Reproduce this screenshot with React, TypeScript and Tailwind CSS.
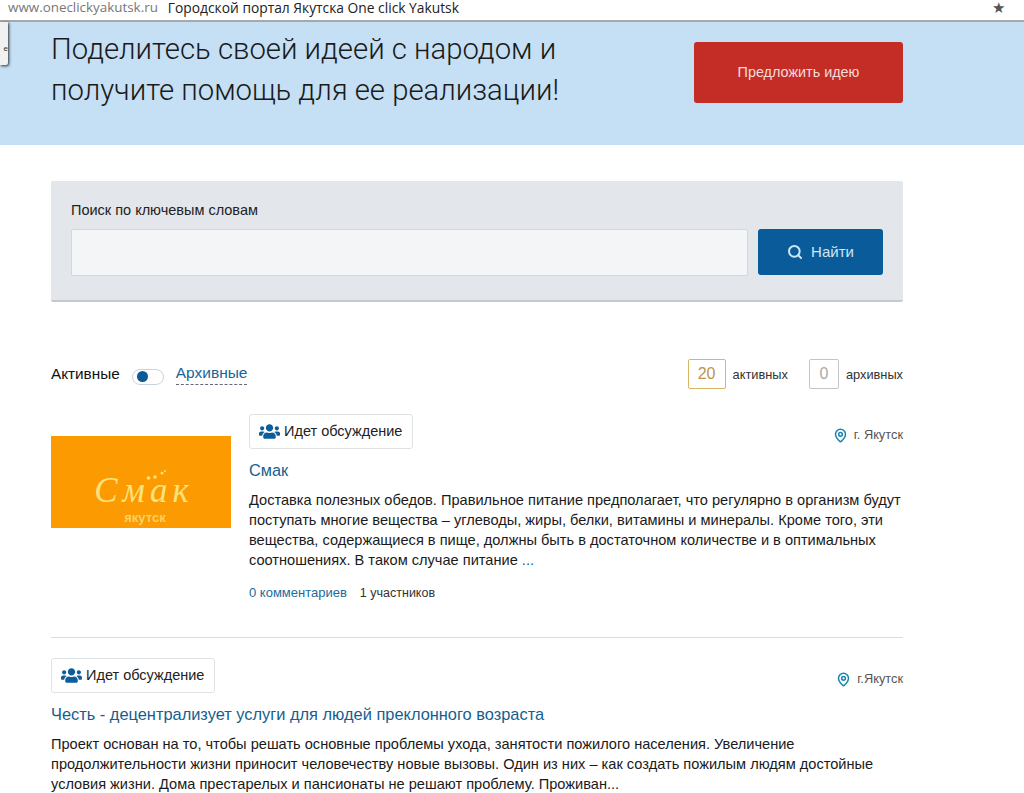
import { FaUsers } from "react-icons/fa";
import { MapPin, Search } from "lucide-react";

const SANS = "font-['Liberation_Sans',Arial,sans-serif]";

function StatusBadge() {
  return (
    <div className="flex h-[35px] items-center gap-[4px] rounded-[3px] border border-[#e0e3e6] bg-white pl-[9px] pr-[10px] text-[14.5px] text-[#222]">
      <FaUsers className="text-[21px] text-[#0d5d9a]" />
      <span>Идет обсуждение</span>
    </div>
  );
}

function Place({ label }: { label: string }) {
  return (
    <div className="mt-[7px] flex items-center gap-[6px] text-[12.8px] text-[#555]">
      <MapPin className="h-[15px] w-[15px] text-[#1a86ad]" strokeWidth={2.4} />
      <span>{label}</span>
    </div>
  );
}

function Counter({ value, label, accent }: { value: string; label: string; accent: boolean }) {
  return (
    <div className="flex items-center gap-[7px]">
      <div
        className={
          "flex h-[30px] items-center justify-center rounded-[2px] border text-[16px] " +
          (accent ? "w-[38px] border-[#d9b566] text-[#c09448]" : "w-[30px] border-[#c4c4c4] text-[#aaa]")
        }
      >
        {value}
      </div>
      <span className="mt-[2px] text-[12.8px] text-[#333]">{label}</span>
    </div>
  );
}

export default function App() {
  return (
    <div className={"relative h-[793px] w-[1024px] overflow-hidden bg-white " + SANS}>
      {/* browser address bar from the screenshot */}
      <div className="flex h-[22px] items-start justify-between border-b-[2px] border-[#a8a8a8] bg-white pl-[8px] pr-[19px] font-['Open_Sans',sans-serif] leading-[15px]">
        <div className="flex gap-[10px]">
          <span className="text-[13.4px] text-[#777]">www.oneclickyakutsk.ru</span>
          <span className="text-[13.8px] text-[#222]">Городской портал Якутска One click Yakutsk</span>
        </div>
        <span className="text-[15px] leading-[15px] text-[#555]">★</span>
      </div>

      <div className="absolute left-0 top-[22px] flex h-[43px] w-[8px] items-end justify-end rounded-br-[2px] bg-[#f1f1f1] pb-[12px] text-[8px] leading-none text-[#333] shadow-[1px_1px_3px_rgba(0,0,0,0.8)]">
        е
      </div>

      {/* hero */}
      <div className="flex h-[123px] items-start justify-between bg-[#c5dff4] pl-[51px] pr-[121px]">
        <h1 className="mt-[7px] font-['Roboto',sans-serif] text-[29.3px] font-light leading-[41px] text-[#1a1a1a]">
          Поделитесь своей идеей с народом и
          <br />
          получите помощь для ее реализации!
        </h1>
        <button className="mt-[20px] h-[61px] w-[209px] rounded-[3px] bg-[#c42d26] text-[14.4px] text-[#f7dcd9]">
          Предложить идею
        </button>
      </div>

      <main className="ml-[51px] w-[852px]">
        {/* search */}
        <div className="mt-[36px] h-[121px] rounded-[2px] border-b-[2px] border-[#c5cad0] bg-[#e3e7ec] px-[20px] pt-[21px]">
          <div className="text-[14.5px] leading-[16px] text-[#222]">Поиск по ключевым словам</div>
          <div className="mt-[11px] flex justify-between">
            <div className="h-[47px] w-[677px] rounded-[2px] border border-[#d3d7db] bg-[#f4f5f6]" />
            <button className="flex h-[46px] w-[125px] items-center justify-center gap-[8px] rounded-[3px] bg-[#0a5b9a] text-[15px] text-[#cfe6f5]">
              <Search className="h-[16px] w-[16px]" strokeWidth={3} />
              Найти
            </button>
          </div>
        </div>

        {/* filter */}
        <div className="mt-[55px] flex h-[34px] items-center justify-between">
          <div className="flex items-center">
            <span className="text-[15.3px] text-[#111]">Активные</span>
            <span className="ml-[12px] mt-[5px] flex h-[16px] w-[32px] items-center rounded-full border border-[#c8d3dc] pl-[4px]">
              <span className="h-[11px] w-[11px] rounded-full bg-[#0a5b9a]" />
            </span>
            <span className="ml-[12px] border-b border-dashed border-[#667] pb-[2px] text-[15.5px] leading-[18px] text-[#1a6496]">
              Архивные
            </span>
          </div>
          <div className="flex items-center gap-[21px]">
            <Counter value="20" label="активных" accent />
            <Counter value="0" label="архивных" accent={false} />
          </div>
        </div>

        {/* first project */}
        <div className="mt-[23px] flex items-start border-b border-[#dcdcdc] pb-[36px]">
          <div className="relative mt-[22px] flex h-[92px] w-[180px] shrink-0 flex-col items-center bg-[#fc9a02]">
            <svg className="absolute left-[95px] top-[32px]" width="22" height="14" viewBox="0 0 22 14">
              <g fill="#fbe27a">
                <circle cx="2.5" cy="10" r="1.8" />
                <circle cx="9" cy="9" r="1.8" />
                <circle cx="16" cy="5" r="1.5" />
                <circle cx="19" cy="3" r="1" />
              </g>
            </svg>
            <span className="ml-[6px] mt-[38px] font-['Liberation_Serif',serif] text-[35px] italic leading-[34px] tracking-[5px] text-[#fbe27a]">
              Смак
            </span>
            <span className="ml-[8px] mt-[4px] text-[13px] font-bold leading-[12px] text-[#fbd060]">якутск</span>
          </div>
          <div className="ml-[18px] min-w-0 flex-1">
            <div className="flex items-center justify-between">
              <StatusBadge />
              <Place label="г. Якутск" />
            </div>
            <h2 className="mt-[11px] text-[16.3px] leading-[20px] text-[#15608f]">Смак</h2>
            <p className="mt-[10px] text-[14.6px] leading-[20px] text-[#1a1a1a]">
              Доставка полезных обедов. Правильное питание предполагает, что регулярно в организм будут поступать многие
              вещества – углеводы, жиры, белки, витамины и минералы. Кроме того, эти вещества, содержащиеся в пище, должны
              быть в достаточном количестве и в оптимальных соотношениях. В таком случае питание{" "}
              <span className="text-[#15608f]">...</span>
            </p>
            <div className="mt-[15px] flex gap-[13px] text-[13px] leading-[16px]">
              <span className="text-[#1a6ba0]">0 комментариев</span>
              <span className="text-[12.5px] text-[#333]">1 участников</span>
            </div>
          </div>
        </div>

        {/* second project */}
        <div className="mt-[20px]">
          <div className="flex items-center justify-between">
            <StatusBadge />
            <Place label="г.Якутск" />
          </div>
          <h2 className="mt-[11px] text-[16.4px] leading-[20px] text-[#15608f]">
            Честь - децентрализует услуги для людей преклонного возраста
          </h2>
          <p className="mt-[10px] text-[14.6px] leading-[20px] text-[#1a1a1a]">
            Проект основан на то, чтобы решать основные проблемы ухода, занятости пожилого населения. Увеличение
            продолжительности жизни приносит человечеству новые вызовы. Один из них – как создать пожилым людям достойные
            условия жизни. Дома престарелых и пансионаты не решают проблему. Проживан...
          </p>
        </div>
      </main>
    </div>
  );
}
